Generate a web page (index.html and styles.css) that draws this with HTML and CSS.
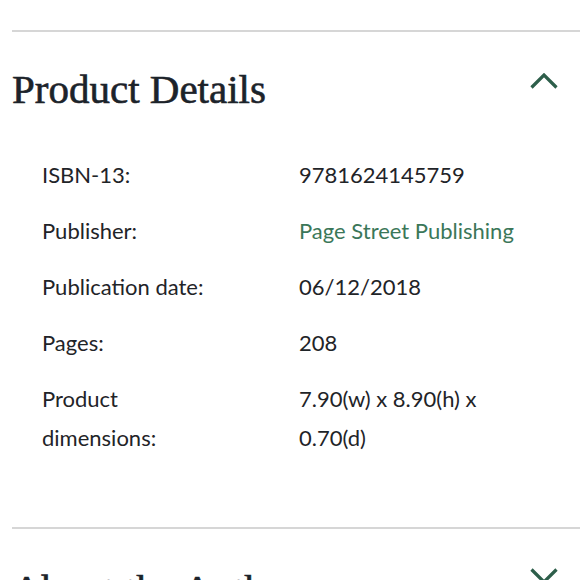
FILE: index.html
```html
<!DOCTYPE html>
<html>
<head>
<meta charset="utf-8">
<link rel="stylesheet" href="styles.css">
</head>
<body>
<div class="page">
  <section class="section">
    <div class="section-head">
      <h2 class="title">Product Details</h2>
      <svg class="chev" width="28" height="16" viewBox="0 0 28 16"><path d="M1.5 14.5 L14 2 L26.5 14.5" fill="none" stroke="#2d5e4a" stroke-width="3.2"/></svg>
    </div>
    <dl class="details">
      <dt>ISBN-13:</dt><dd>9781624145759</dd>
      <dt>Publisher:</dt><dd><a class="link">Page Street Publishing</a></dd>
      <dt>Publication date:</dt><dd>06/12/2018</dd>
      <dt>Pages:</dt><dd>208</dd>
      <dt>Product dimensions:</dt><dd>7.90(w) x 8.90(h) x 0.70(d)</dd>
    </dl>
  </section>
  <section class="section">
    <div class="section-head section-head--next">
      <h2 class="title">About the Author</h2>
      <svg class="chev" width="28" height="16" viewBox="0 0 28 16"><path d="M1.5 1.5 L14 14 L26.5 1.5" fill="none" stroke="#2d5e4a" stroke-width="3.2"/></svg>
    </div>
  </section>
</div>
</body>
</html>
```
FILE: styles.css
```css
html, body { margin: 0; padding: 0; background: #fff; }
.page { padding: 30px 0 0 12px; }
.section { border-top: 2px solid #d6d6d6; }
.section-head {
  display: flex;
  justify-content: space-between;
  align-items: flex-start;
  padding: 33px 22px 0 0;
}
.section-head--next { padding-top: 36px; }
.title {
  margin: 0;
  font-family: "Liberation Serif", serif;
  font-weight: normal;
  font-size: 41px;
  line-height: 48px;
  color: #1c232a;
  -webkit-text-stroke: 0.6px #1c232a;
}
.chev { margin-top: 8px; display: block; }
.section-head--next .chev { margin-top: 3px; }
.details {
  margin: 0;
  padding: 42px 50px 70px 30px;
  display: grid;
  grid-template-columns: 185px 1fr;
  column-gap: 72px;
  row-gap: 17px;
  font-family: Lato, "Liberation Sans", sans-serif;
  font-size: 22px;
  line-height: 39px;
  color: #1f2428;
}
.details dt, .details dd { margin: 0; }
.link { color: #3b7759; text-decoration: none; }
```
